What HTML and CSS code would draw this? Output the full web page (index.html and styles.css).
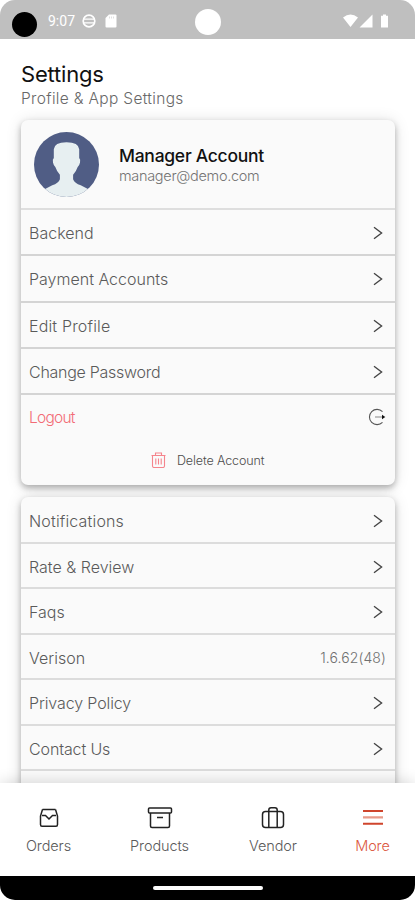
FILE: index.html
```html
<!DOCTYPE html>
<html lang="en">
<head>
<meta charset="utf-8">
<title>Settings</title>
<link rel="stylesheet" href="styles.css">
</head>
<body>
<svg class="defs" width="0" height="0"><symbol id="chevron" viewBox="0 0 10 14"><path d="M1 1.200 8.600 7 1 12.800" fill="none" stroke="#444" stroke-width="1.350"/></symbol></svg>
<div class="phone">
  <header class="status">
    <span class="camera"></span>
    <span class="time">9:07</span>
    <svg class="globe" viewBox="0 0 14 14"><circle cx="7" cy="7" r="5.800" fill="none" stroke="#fff" stroke-width="1.700"/><path d="M1 5.200h12M1 8.800h12" stroke="#fff" stroke-width="1.300"/></svg>
    <svg class="sd" viewBox="0 0 12 14"><path d="M4 .5h6.500q1 0 1 1v11q0 1-1 1h-9q-1 0-1-1V4z" fill="#fff"/><path d="M4.500 2.500v2M6.500 2.500v2M8.500 2.500v2" stroke="#d8d8d8" stroke-width=".8"/></svg>
    <span class="dot"></span>
    <svg class="signals" viewBox="0 0 46 14"><path d="M0 3.500Q7.500-2.500 15 3.500L7.500 13zM29.500.5v13H16.500zM38 1.800h2V.5h3v1.300h2v11.700h-7z" fill="#fff"/></svg>
  </header>
  <main class="content">
    <h1>Settings</h1>
    <p class="subtitle">Profile &amp; App Settings</p>
    <section class="card account">
      <div class="profile">
        <svg class="avatar" viewBox="0 0 64 64"><defs><clipPath id="round"><circle cx="32" cy="32" r="32"/></clipPath></defs><g clip-path="url(#round)"><path fill="#505d85" d="M0 0h64v64H0z"/><path fill="#e7eff1" d="M19.500 17Q20 10 32 10t12.500 7v8.500q1.500 1 .8 4.500t-2.300 4.500Q41.500 39 38.500 42v4.500q1.500 4 7.500 6l9 4.500V64H9v-7l9-4.500q6-2 7.500-6V42q-3-3-4.500-7.500-1.600-1-2.300-4.500t.8-4.500z"/></g></svg>
        <div class="identity"><div class="name">Manager Account</div><div class="email">manager@demo.com</div></div>
      </div>
      <div class="row"><span>Backend</span><svg class="chev"><use href="#chevron"/></svg></div>
      <div class="row"><span>Payment Accounts</span><svg class="chev"><use href="#chevron"/></svg></div>
      <div class="row"><span class="wide">Edit Profile</span><svg class="chev"><use href="#chevron"/></svg></div>
      <div class="row"><span class="tight">Change Password</span><svg class="chev"><use href="#chevron"/></svg></div>
      <div class="row logout"><span>Logout</span><svg class="exit" viewBox="0 0 18 18"><path d="M14.500 3.700A7.600 7.600 0 1 0 14.500 14.300" fill="none" stroke="#555" stroke-width="1.100"/><path d="M7 9h8" stroke="#888"/><path d="M14 6.800 17.300 9 14 11.200z" fill="#111"/></svg></div>
      <div class="delete"><svg class="trash" viewBox="0 0 15 16"><g fill="none" stroke="#f5848c" stroke-width="1.100"><path d="M.5 3.500h14M4.500 3V1h6v2M1.500 4v10q0 1.500 1.500 1.500h9q1.500 0 1.500-1.500V4M4.800 6.500v6M10.200 6.500v6M7.500 6.500v6"/></g></svg><span>Delete Account</span></div>
    </section>
    <section class="card general">
      <div class="row"><span class="wide">Notifications</span><svg class="chev"><use href="#chevron"/></svg></div>
      <div class="row"><span>Rate &amp; Review</span><svg class="chev"><use href="#chevron"/></svg></div>
      <div class="row"><span>Faqs</span><svg class="chev"><use href="#chevron"/></svg></div>
      <div class="row"><span>Verison</span><span class="version">1.6.62(48)</span></div>
      <div class="row"><span class="snug">Privacy Policy</span><svg class="chev"><use href="#chevron"/></svg></div>
      <div class="row"><span class="snug">Contact Us</span><svg class="chev"><use href="#chevron"/></svg></div>
      <div class="row"></div>
    </section>
  </main>
  <nav class="tabs">
    <div class="tab orders"><svg viewBox="0 0 26 24"><g fill="none" stroke="#222" stroke-width="1.500"><path d="M6.500 3.500h13M6.500 3.500 4.500 10v8.500q0 1.800 1.500 1.800h14q1.500 0 1.500-1.800V10L19.500 3.500"/><path d="M6 9.500h3.500l3.500 3.500 3.500-3.500H20"/></g></svg><span>Orders</span></div>
    <div class="tab products"><svg viewBox="0 0 26 24"><g fill="none" stroke="#222" stroke-width="1.500"><rect x="1.500" y="2" width="23" height="5" rx="1"/><path d="M3.500 7v13q0 1.500 1.500 1.500h16q1.500 0 1.500-1.500V7M10 11.500h6"/></g></svg><span>Products</span></div>
    <div class="tab vendor"><svg viewBox="0 0 26 24"><g fill="none" stroke="#222" stroke-width="1.500"><rect x="2.500" y="5.500" width="21" height="16" rx="3"/><path d="M8.800 21.500V4q0-2.300 2.200-2.300h4q2.200 0 2.200 2.300v17.500"/></g></svg><span>Vendor</span></div>
    <div class="tab more"><svg viewBox="0 0 26 24"><path d="M3 5h20M3 17.700h20" stroke="#cf452d" stroke-width="1.900"/><path d="M3 11.300h20" stroke="#e89a89" stroke-width="2.200"/></svg><span>More</span></div>
  </nav>
  <footer class="gesture"><span></span></footer>
</div>
</body>
</html>
```
FILE: styles.css
```css
* { box-sizing: border-box; }
body { margin: 0; background: #fff; font-family: "Inter", "Liberation Sans", sans-serif; font-weight: 300; color: #5a5a5a; }
.defs { display: block; height: 0; }
.phone { width: 415px; height: 900px; overflow: hidden; display: flex; flex-direction: column; border-radius: 15px; }
.status { flex: none; height: 39px; background: #bfbfbf; display: flex; align-items: center; }
.camera { width: 25px; height: 25px; border-radius: 50%; background: #000; margin: 10px 0 0 12px; }
.time { font: 400 14px Roboto, sans-serif; color: #fff; margin: 3px 0 0 11px; width: 28px; }
.globe { width: 14px; height: 14px; margin: 2px 0 0 6px; }
.sd { width: 12px; height: 14px; margin: 2px 0 0 9px; }
.dot { width: 26px; height: 26px; border-radius: 50%; background: #fff; margin: 4px 0 0 78px; }
.signals { width: 46px; height: 14px; margin: 2px 0 0 122px; }
.content { flex: none; height: 744px; overflow: hidden; padding: 22px 20px 0 21px; white-space: nowrap; }
h1 { margin: 0; font-size: 22px; line-height: 26px; font-weight: 400; letter-spacing: -.2px; color: #111; }
.subtitle { margin: 0; font-size: 15.500px; line-height: 24px; letter-spacing: .33px; color: #686868; }
.card { background: #fafafa; border-radius: 7px; box-shadow: 0 3px 6px rgba(0,0,0,.28), 0 1px 16px rgba(0,0,0,.12); }
.account { margin-top: 9px; height: 365px; }
.general { margin-top: 12px; height: 330px; padding-top: 1px; }
.profile { height: 90px; display: flex; align-items: center; border-bottom: 2px solid #dedede; padding-left: 13px; }
.avatar { width: 65px; height: 65px; margin-right: 20px; }
.identity { padding-top: 4px; }
.name { font-size: 17.500px; line-height: 20px; font-weight: 500; letter-spacing: -.27px; color: #111; }
.email { font-size: 14.500px; line-height: 20px; letter-spacing: -.31px; color: #747474; }
.row { height: 46.300px; border-bottom: 2px solid #d4d4d4; display: flex; align-items: center; justify-content: space-between; padding: 2px 12px 0 8px; font-size: 16px; }
.general .row { height: 45.500px; border-color: #dcdcdc; padding-top: 3px; }
.wide { letter-spacing: .16px; }
.tight { letter-spacing: -.27px; }
.snug { letter-spacing: -.12px; }
.chev { width: 10px; height: 14px; }
.row.logout { height: 44px; border: 0; padding: 0 9px 0 8px; color: #f26c76; font-size: 15.500px; letter-spacing: -.75px; }
.exit { width: 18px; height: 18px; }
.delete { display: flex; align-items: center; height: 42px; padding-left: 130px; gap: 11px; font-size: 12.500px; letter-spacing: -.12px; color: #4c4c4c; }
.trash { width: 15px; height: 16px; }
.version { font-size: 14px; margin-right: -3px; letter-spacing: .1px; color: #707070; }
.tabs { flex: none; height: 93px; background: #fff; position: relative; display: flex; box-shadow: 0 -1px 14px rgba(0,0,0,.15); font-size: 14.500px; }
.tab { display: flex; flex-direction: column; align-items: center; padding-top: 23px; gap: 7px; }
.tab svg { width: 26px; height: 24px; }
.tab span { line-height: 18px; letter-spacing: -.1px; }
.orders { width: 97px; }
.products { width: 125px; }
.vendor { width: 102px; }
.more { width: 97px; margin-right: -6px; color: #dc5841; }
.gesture { flex: 1; background: #000; display: flex; justify-content: center; padding-top: 10px; }
.gesture span { width: 110px; height: 4px; border-radius: 2px; background: #fff; }
```
